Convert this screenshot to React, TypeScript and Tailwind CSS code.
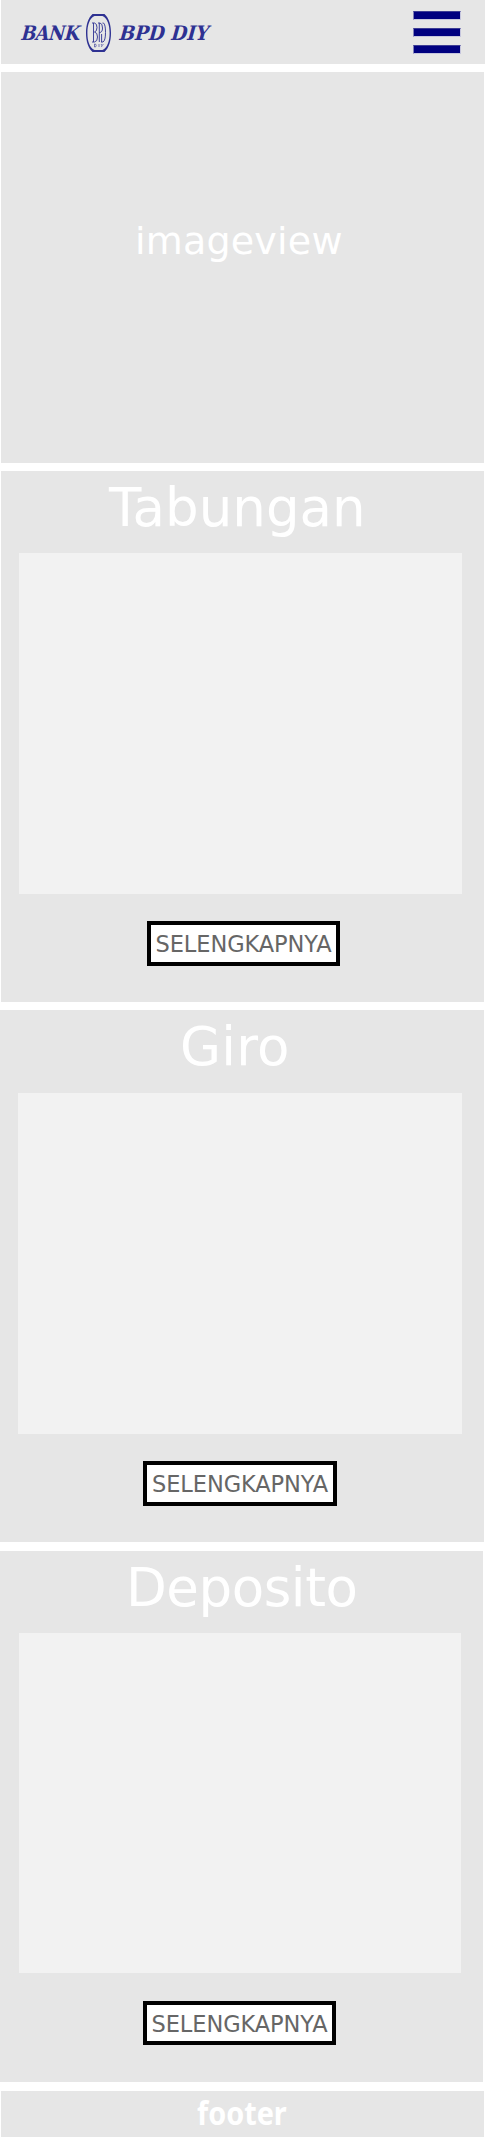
type Card = {
  title: string;
  titleClass: string;
  cardClass: string;
  panelClass: string;
  buttonClass: string;
};

const cards: Card[] = [
  {
    title: "Tabungan",
    titleClass: "ml-[108px] mt-[6px]",
    cardClass: "mt-[8px] ml-px h-[531px] w-[483px]",
    panelClass: "ml-[18px] mt-[15px] h-[341px] w-[443px]",
    buttonClass: "ml-[146px] mt-[27px] h-[45px] w-[193px]",
  },
  {
    title: "Giro",
    titleClass: "ml-[180px] mt-[6px] tracking-[0.2px]",
    cardClass: "mt-[8px] h-[532px] w-[484px]",
    panelClass: "ml-[18px] mt-[16px] h-[341px] w-[444px]",
    buttonClass: "ml-[143px] mt-[27px] h-[45px] w-[194px]",
  },
  {
    title: "Deposito",
    titleClass: "ml-[126px] mt-[6px] tracking-[-0.45px]",
    cardClass: "mt-[9px] h-[531px] w-[483px]",
    panelClass: "ml-[19px] mt-[15px] h-[340px] w-[442px]",
    buttonClass: "ml-[143px] mt-[28px] h-[44px] w-[193px]",
  },
];

function Emblem() {
  return (
    <svg className="ml-[6px] mt-[14px] h-[38px] w-[25px] shrink-0" viewBox="0 0 25 38" fill="none" stroke="#2e3192">
      <path fill="#2e3192" stroke="none" fillRule="evenodd" d="M6.500 0H18.500C23 4 25 11 25 19S23 34 18.500 38H6.500C2 34 0 27 0 19S2 4 6.500 0ZM8.500 2C3.500 4.500 1.400 11 1.400 19S3.500 33.500 8.500 36H16.500C21.500 33.500 23.600 27 23.600 19S21.500 4.500 16.500 2Z" />
      <path strokeWidth=".9" d="M6 9H8.500Q11 9.500 11 13.500Q11 17.500 8.500 18Q11.500 18.500 11.500 23Q11.500 27.500 8.500 28H6M7.500 9V28M12 9H14Q16.500 9.500 16.500 14Q16.500 18.500 13.500 18.500M13.300 9V28M16.500 9H17.500Q19.500 10.500 19.500 18.500Q19.500 26.500 17 28H15M15.600 20V28" />
      <path strokeWidth=".6" d="M8.500 30V33H9.500Q11 31.500 9.500 30ZM13 30V33M15 30L16 31.500L17.500 30M16 31.500L15.500 33" />
    </svg>
  );
}

function MenuBar() {
  return <span className="block h-[9px] w-full border border-t-[#3d3d95] border-r-[#c6c6de] border-b-[#c6c6de] border-l-[#8080b8] bg-[#000080]" />;
}

export default function App() {
  return (
    <div className="flex h-[2137px] w-[485px] flex-col overflow-hidden bg-white font-['DejaVu_Sans',sans-serif]">
      <header className="ml-px flex h-[64px] w-[484px] shrink-0 bg-[#e6e6e6]">
        <div className="flex w-[412px] shrink-0 font-['DejaVu_Serif',serif] text-[20px] font-bold italic leading-[26px] text-[#2e3192]">
          <span className="ml-[20px] mt-[20px] w-[59px] shrink-0 origin-left scale-x-[0.88] -skew-x-6 whitespace-nowrap tracking-[-0.5px]">BANK</span>
          <Emblem />
          <span className="ml-[8px] mt-[20px] shrink-0 origin-left scale-x-[0.92] -skew-x-6 whitespace-nowrap">BPD DIY</span>
        </div>
        <button aria-label="Menu" className="mt-[11px] flex h-[43px] w-[48px] flex-col justify-between">
          <MenuBar />
          <MenuBar />
          <MenuBar />
        </button>
      </header>
      <section className="ml-px mt-[8px] h-[391px] w-[483px] shrink-0 bg-[#e6e6e6]">
        <p className="ml-[134px] mt-[145px] whitespace-nowrap text-[38px] leading-[48px] tracking-[0.2px] text-white">imageview</p>
      </section>
      {cards.map((c) => (
        <section key={c.title} className={`flex shrink-0 flex-col bg-[#e6e6e6] ${c.cardClass}`}>
          <h2 className={`h-[61px] shrink-0 whitespace-nowrap text-[53px] leading-[61px] text-white ${c.titleClass}`}>{c.title}</h2>
          <div className={`shrink-0 bg-[#f2f2f2] ${c.panelClass}`} />
          <button className={`flex shrink-0 items-center justify-center whitespace-nowrap border-4 border-black bg-white pt-[2px] text-[22.5px] leading-none tracking-[-0.1px] text-[#666666] ${c.buttonClass}`}>
            SELENGKAPNYA
          </button>
        </section>
      ))}
      <footer className="ml-px mt-[9px] h-[46px] w-[483px] shrink-0 bg-[#e6e6e6]">
        <p className="ml-[196px] origin-left scale-x-[0.9] whitespace-nowrap font-['Noto_Sans',sans-serif] text-[32px] font-bold leading-[44px] text-white">footer</p>
      </footer>
    </div>
  );
}
